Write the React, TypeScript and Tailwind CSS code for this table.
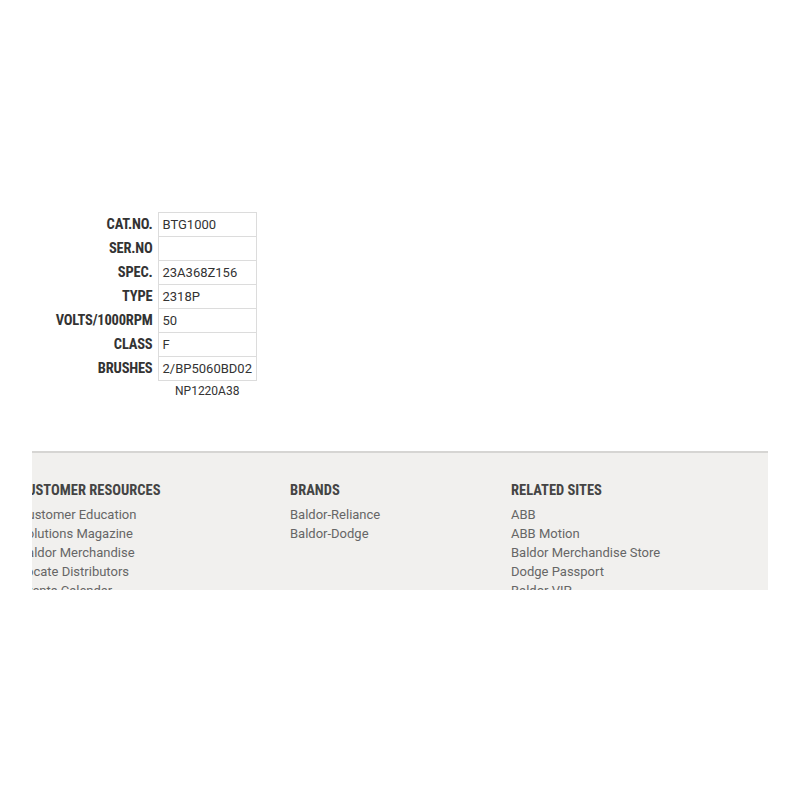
const ROWS: { label: string; value: string }[] = [
  { label: 'CAT.NO.', value: 'BTG1000' },
  { label: 'SER.NO', value: '' },
  { label: 'SPEC.', value: '23A368Z156' },
  { label: 'TYPE', value: '2318P' },
  { label: 'VOLTS/1000RPM', value: '50' },
  { label: 'CLASS', value: 'F' },
  { label: 'BRUSHES', value: '2/BP5060BD02' },
]

const COLUMNS: { title: string; links: string[]; w: string }[] = [
  {
    title: 'CUSTOMER RESOURCES',
    links: ['Customer Education', 'Solutions Magazine', 'Baldor Merchandise', 'Locate Distributors', 'Events Calendar'],
    w: 'w-[271px]',
  },
  { title: 'BRANDS', links: ['Baldor-Reliance', 'Baldor-Dodge'], w: 'w-[221px]' },
  {
    title: 'RELATED SITES',
    links: ['ABB', 'ABB Motion', 'Baldor Merchandise Store', 'Dodge Passport', 'Baldor VIP'],
    w: 'w-[220px]',
  },
]

const condensed = "font-['Roboto_Condensed','Liberation_Sans_Narrow','DejaVu_Sans_Condensed',sans-serif]"

function Nameplate() {
  return (
    <div className="flex flex-col items-start pl-[20px] pt-[212px]">
      <table className="border-collapse">
        <tbody>
          {ROWS.map(r => (
            <tr key={r.label} className="h-[24px]">
              <td className={`w-[138px] pr-[5px] text-right text-[14.5px] font-bold tracking-[-0.2px] text-[#333] ${condensed}`}>
                {r.label}
              </td>
              <td className="w-[97px] border border-[#dcdcdc] px-[4px] text-[13px] text-[#333]">{r.value}</td>
            </tr>
          ))}
          <tr className="h-[20px]">
            <td />
            <td className="text-center align-middle text-[12px] text-[#333]">NP1220A38</td>
          </tr>
        </tbody>
      </table>
    </div>
  )
}

function Footer() {
  return (
    <div className="ml-[32px] mt-[50px] h-[139px] w-[736px] overflow-hidden border-t-2 border-[#d6d5d3] bg-[#f1f0ee]">
      <div className="-ml-[13px] flex pt-[29px]">
        {COLUMNS.map(c => (
          <div key={c.title} className={`${c.w} shrink-0`}>
            <div className={`text-[14.5px] font-bold leading-[18px] text-[#444] ${condensed}`}>{c.title}</div>
            <ul className="mt-[5px]">
              {c.links.map(l => (
                <li key={l} className="text-[13px] leading-[19px] text-[#666]">{l}</li>
              ))}
            </ul>
          </div>
        ))}
      </div>
    </div>
  )
}

export default function App() {
  return (
    <div className="h-[800px] w-[800px] bg-white font-['Roboto',sans-serif]">
      <Nameplate />
      <Footer />
    </div>
  )
}
